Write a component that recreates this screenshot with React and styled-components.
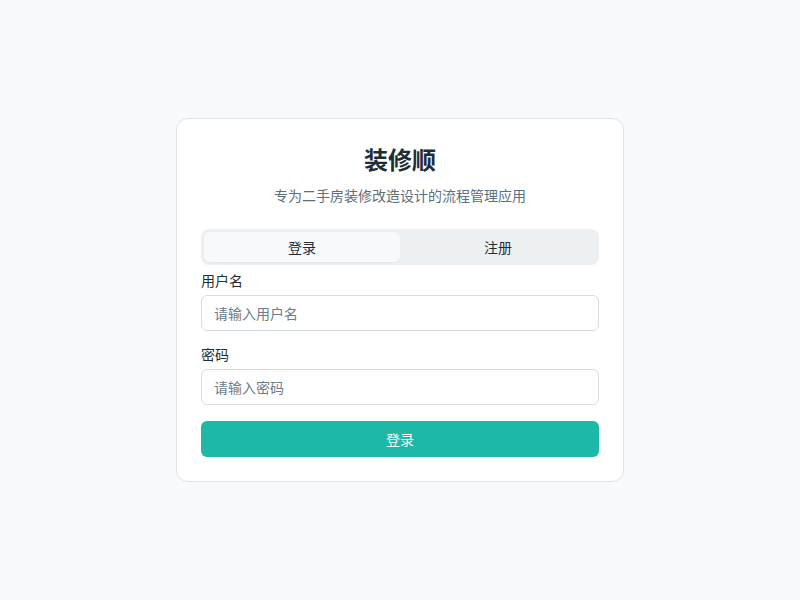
import React, { useState } from 'react';
import styled, { createGlobalStyle } from 'styled-components';

const GlobalStyle = createGlobalStyle`
  * { box-sizing: border-box; }
  body {
    margin: 0;
    background: #f8f9fb;
    font-family: "Noto Sans", "Noto Sans CJK SC", sans-serif;
    color: #1f2d36;
  }
`;

function App() {
  const [tab, setTab] = useState('login');
  return (
    <Page>
      <GlobalStyle />
      <Card>
        <Title>装修顺</Title>
        <Subtitle>专为二手房装修改造设计的流程管理应用</Subtitle>
        <Tabs>
          <Tab active={tab === 'login'} onClick={() => setTab('login')}>登录</Tab>
          <Tab active={tab === 'register'} onClick={() => setTab('register')}>注册</Tab>
        </Tabs>
        <Field>
          <Label>用户名</Label>
          <Input placeholder="请输入用户名" />
        </Field>
        <Field>
          <Label>密码</Label>
          <Input type="password" placeholder="请输入密码" />
        </Field>
        <Submit>登录</Submit>
      </Card>
    </Page>
  );
}

export default App;

// styling Components

const Page = styled.div`
  min-height: 100vh;
  display: flex;
  align-items: center;
  justify-content: center;
`;

const Card = styled.div`
  width: 448px;
  background: #fff;
  border: 1px solid #dde3e8;
  border-radius: 12px;
  padding: 24px;
  display: flex;
  flex-direction: column;
`;

const Title = styled.h1`
  margin: 0;
  font-size: 24px;
  line-height: 34px;
  font-weight: 700;
  text-align: center;
  color: #1f2d36;
`;

const Subtitle = styled.p`
  margin: 9px 0 23px;
  font-size: 14px;
  line-height: 20px;
  text-align: center;
  color: #5b6f7c;
`;

const Tabs = styled.div`
  display: grid;
  grid-template-columns: 1fr 1fr;
  height: 36px;
  padding: 3px;
  background: #ecf0f3;
  border-radius: 8px;
`;

const Tab = styled.div`
  display: flex;
  align-items: center;
  justify-content: center;
  font-size: 14px;
  color: #1f2d36;
  border-radius: 6px;
  cursor: pointer;
  background: ${props => (props.active ? '#f7f9fa' : 'transparent')};
  box-shadow: ${props => (props.active ? '0 1px 2px rgba(0,0,0,0.04)' : 'none')};
`;

const Field = styled.div`
  display: flex;
  flex-direction: column;
  gap: 4px;
  margin-top: 6px;
  & + & { margin-top: 14px; }
`;

const Label = styled.label`
  font-size: 14px;
  line-height: 20px;
  color: #1f2d36;
`;

const Input = styled.input`
  height: 36px;
  padding: 0 12px;
  border: 1px solid #d5dde3;
  border-radius: 6px;
  font-family: inherit;
  font-size: 14px;
  color: #1f2d36;
  background: #fff;
  outline: none;
  &::placeholder { color: #6b7d89; }
`;

const Submit = styled.button`
  margin-top: 16px;
  height: 36px;
  border: none;
  border-radius: 6px;
  background: #1db8a8;
  color: #fff;
  font-family: inherit;
  font-size: 14px;
  cursor: pointer;
`;
